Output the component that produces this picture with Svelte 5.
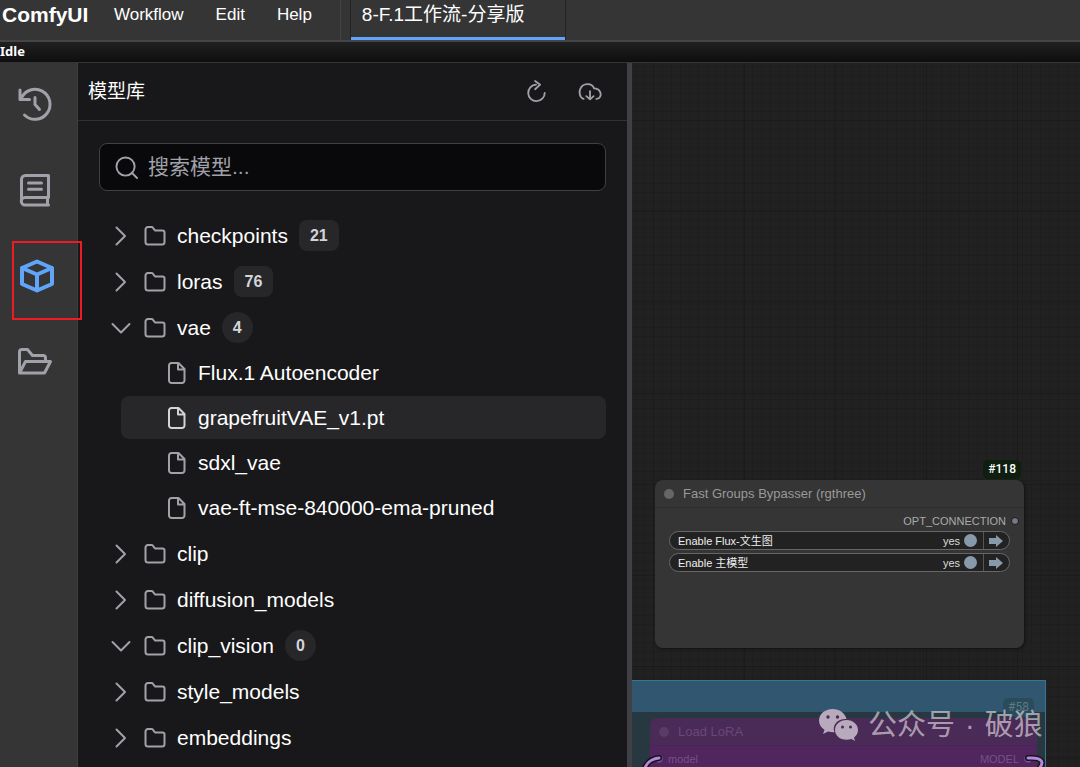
<script lang="ts">
	interface TreeNode {
		name: string;
		count?: number;
		open?: boolean;
		children?: string[];
	}

	let folders: TreeNode[] = $state([
		{ name: 'checkpoints', count: 21 },
		{ name: 'loras', count: 76 },
		{
			name: 'vae',
			count: 4,
			open: true,
			children: ['Flux.1 Autoencoder', 'grapefruitVAE_v1.pt', 'sdxl_vae', 'vae-ft-mse-840000-ema-pruned']
		},
		{ name: 'clip' },
		{ name: 'diffusion_models' },
		{ name: 'clip_vision', count: 0, open: true },
		{ name: 'style_models' },
		{ name: 'embeddings' }
	]);

	const menus = ['Workflow', 'Edit', 'Help'];
	const widgets = ['Enable Flux-文生图', 'Enable 主模型'];
	const tabs = ['queue', 'nodes', 'models', 'workflows'];

	let activeTab = $state('models');
	let selected = $state('grapefruitVAE_v1.pt');
	let query = $state('');
</script>

<div class="app">
	<header class="topbar">
		<h1>ComfyUI</h1>
		<nav>
			{#each menus as menu}
				<button class="menu">{menu}</button>
			{/each}
		</nav>
		<button class="workflow-tab">8-F.1工作流-分享版</button>
	</header>
	<div class="status">Idle</div>

	<main>
		<aside class="sidebar">
			{#each tabs as tab}
				<button class="side-tab" class:active={activeTab === tab} aria-label={tab} onclick={() => (activeTab = tab)}>
					<svg viewBox="0 0 36 36">
						{#if tab === 'queue'}
							<path d="M3 4v9.500h9.500M4 13a15 15 0 1 1 3.500 16M18 11.500v7l4.500 5" />
						{:else if tab === 'nodes'}
							<path d="M8.500 3.500H31.500V25.500H8a3.700 3.700 0 0 0 0 7.500H31.500M4.500 29V7.500a4 4 0 0 1 4-4M30.500 25.500V33M11.500 11h13M11.500 17.300h13" />
						{:else if tab === 'models'}
							<path d="M20 3.500L35 10V26L20 32.500L5 26V10ZM5 10L20 16.500L35 10M20 16.500V32.500" />
						{:else}
							<path d="M2.500 29V8q0-2.500 2.500-2.500h5.500l5 6H26q2.500 0 2.500 2.500v3M2.500 29L8.500 17.500H33.500L27.500 29Z" />
						{/if}
					</svg>
					{#if tab === 'models'}
						<span class="marker"></span>
					{/if}
				</button>
			{/each}
		</aside>

		<section class="panel">
			<div class="panel-header">
				<h2>模型库</h2>
				<button class="tool" aria-label="Refresh">
					<svg viewBox="0 0 24 24"><path d="M12 4A9 9 0 1 0 21.500 13M11 0l5.500 4L11 9" /></svg>
				</button>
				<button class="tool" aria-label="Load all folders">
					<svg viewBox="0 0 24 24"><path d="M5 19.500C0 18 0 11 1.500 8.500C4 2 14 1.500 16.500 8C23 8 25.500 15 22 18.500Q20 19.500 19 19.500M12 11v9M8 16.500l4 3.500l4-3.500" /></svg>
				</button>
			</div>

			<div class="panel-body">
				<label class="search">
					<svg viewBox="0 0 24 24"><circle cx="11" cy="11" r="9.500" /><path d="M17.500 17.500L23 23" /></svg>
					<input type="text" placeholder="搜索模型..." aria-label="搜索模型" bind:value={query} />
				</label>

				<ul class="tree">
					{#each folders as folder}
						<li>
							<button class="row" onclick={() => (folder.open = !folder.open)}>
								<svg class="chevron" viewBox="0 0 24 24">
									<path d={folder.open ? 'M3.500 8L12 16.500L20.500 8' : 'M7.500 3.500L16 12L7.500 20.500'} />
								</svg>
								<svg class="folder" viewBox="0 0 22 22">
									<path d="M1.500 17V4.500a2.500 2.500 0 0 1 2.500-2.500h3.500q1 0 1.500.800l2 2.700h7.500a2 2 0 0 1 2 2V17a2.500 2.500 0 0 1-2.500 2.500H4A2.500 2.500 0 0 1 1.500 17Z" />
								</svg>
								<span>{folder.name}</span>
								{#if folder.count !== undefined}
									<span class="badge" class:round={folder.count < 10}>{folder.count}</span>
								{/if}
							</button>
							{#if folder.open && folder.children}
								<ul class="leaves">
									{#each folder.children as file}
										<li>
											<button class="row leaf" class:selected={selected === file} onclick={() => (selected = file)}>
												<svg class="file" viewBox="0 0 20 22">
													<path d="M4 1h7.500l6 6v11.500a2.500 2.500 0 0 1-2.500 2.500H4.500A2.500 2.500 0 0 1 2 18.500V3.500A2.500 2.500 0 0 1 4.500 1M11 1v6.500h6.500" />
												</svg>
												<span>{file}</span>
											</button>
										</li>
									{/each}
								</ul>
							{/if}
						</li>
					{/each}
				</ul>
			</div>
		</section>

		<div class="gutter"></div>

		<section class="canvas">
			<div class="group"></div>

			<article class="node bypasser">
				<span class="node-id">#118</span>
				<h3>Fast Groups Bypasser (rgthree)</h3>
				<div class="output">OPT_CONNECTION <i class="slot"></i></div>
				{#each widgets as widget}
					<div class="widget">
						<span class="widget-name">{widget}</span>
						<span>yes</span>
						<i class="knob"></i>
						<button class="jump" aria-label="Go to group">
							<svg viewBox="0 0 14 12"><path d="M0 3h7V0l7 6l-7 6V9H0Z" /></svg>
						</button>
					</div>
				{/each}
			</article>

			<article class="node lora">
				<span class="node-id">#58</span>
				<h3>Load LoRA</h3>
				<div class="ports"><i class="slot"></i><span>model</span><span class="out">MODEL</span><i class="slot"></i></div>
			</article>

			<svg class="links" viewBox="0 0 420 20">
				<path class="casing" d="M27 11C18 12 14 16 12 24M396 11C412 10 413 16 405 24" />
				<path d="M27 11C18 12 14 16 12 24M396 11C412 10 413 16 405 24" />
			</svg>

			<div class="watermark">
				<svg viewBox="0 0 39 32">
					<path d="M13.500 0C6 0 0 5 0 11.500c0 4 2 7 5.500 9.200L4 25l5-2.500q3 1 6.500.800C12.500 16 19 9.500 27.500 10C26 4 20.500 0 13.500 0Z" />
					<path d="M27.500 11C21 11 16 15.500 16 21s5 9.800 11.500 9.800q2.500 0 5-.800L36 32l-1-3.500c2.500-1.800 4-4.500 4-7.500C39 15.500 34 11 27.500 11Z" />
					<g class="eyes">
						<circle cx="9" cy="8" r="1.700" /><circle cx="18.500" cy="8" r="1.700" />
						<circle cx="23.500" cy="18" r="1.500" /><circle cx="31.500" cy="18" r="1.500" />
					</g>
				</svg>
				<span>公众号</span><span>·</span><span>破狼</span>
			</div>
		</section>
	</main>
</div>

<style>
	:global(body) {
		background: #18181a;
	}

	.app {
		display: flex;
		flex-direction: column;
		height: 100vh;
		overflow: hidden;
		font-family: 'Liberation Sans', 'Noto Sans CJK SC', sans-serif;
		color: #fff;
	}

	.app * {
		box-sizing: border-box;
	}

	h1,
	h2,
	h3,
	ul {
		margin: 0;
		padding: 0;
		list-style: none;
	}

	button {
		padding: 0;
		border: 0;
		background: none;
		color: inherit;
		font: inherit;
		cursor: pointer;
	}

	svg {
		display: block;
		flex: none;
		fill: none;
		stroke: #a1a1aa;
		stroke-width: 2;
		stroke-linecap: round;
		stroke-linejoin: round;
		overflow: visible;
	}

	.topbar {
		display: flex;
		flex: none;
		height: 42px;
		padding-left: 2px;
		background: #353535;
		border-bottom: 2px solid #464646;
		line-height: 29px;
	}

	h1 {
		width: 98px;
		font-size: 21px;
	}

	nav {
		display: flex;
		gap: 32px;
		padding-left: 14px;
		padding-right: 28px;
		border-right: 1px solid #42424a;
	}

	.menu {
		display: flex;
		font-size: 17px;
	}

	.workflow-tab {
		display: flex;
		width: 216px;
		margin-left: 9px;
		padding-left: 11px;
		border: 1px solid #232323;
		border-width: 0 1px;
		box-shadow: inset 0 -3px #60a5fa;
		font-size: 19px;
	}

	.status {
		flex: none;
		height: 21px;
		background: linear-gradient(#202020, #0e0e0e);
		border-bottom: 1px solid #353538;
		font: bold 13px/18px 'Noto Sans', sans-serif;
	}

	main {
		display: grid;
		grid-template-columns: 78px minmax(0, 549fr) 5px minmax(0, 448fr);
		grid-template-rows: minmax(0, 1fr);
		flex: 1;
		min-height: 0;
	}

	.sidebar {
		display: flex;
		flex-direction: column;
		gap: 4px;
		background: #353535;
		border-right: 1px solid #3e3e40;
	}

	.side-tab {
		position: relative;
		display: flex;
		align-items: center;
		height: 82px;
		padding-left: 17px;
	}

	.side-tab svg {
		width: 36px;
		height: 36px;
		stroke-width: 3;
	}

	.side-tab.active svg {
		stroke: #60a5fa;
		stroke-width: 4;
	}

	.marker {
		position: absolute;
		z-index: 1;
		top: 6px;
		left: 12px;
		width: 70px;
		height: 79px;
		border: 2px solid #ed1c24;
	}

	.panel {
		background: #18181a;
		overflow: hidden;
	}

	.panel-header {
		display: flex;
		align-items: center;
		height: 58px;
		padding: 0 10px;
		border-bottom: 1px solid #303036;
	}

	h2 {
		flex: 1;
		font-size: 19px;
		font-weight: 400;
		line-height: 24px;
	}

	.tool {
		display: flex;
		justify-content: center;
		width: 54px;
	}

	.tool svg {
		width: 22px;
		height: 22px;
	}

	.panel-body {
		padding: 22px 21px;
	}

	.search {
		display: flex;
		align-items: center;
		gap: 10px;
		height: 48px;
		padding: 0 15px;
		background: #09090b;
		border: 1px solid #3f3f46;
		border-radius: 8px;
	}

	.search svg {
		width: 23px;
		height: 23px;
	}

	input {
		flex: 1;
		min-width: 0;
		padding: 0;
		border: 0;
		outline: 0;
		background: none;
		color: #fff;
		font: inherit;
		font-size: 21px;
	}

	input::placeholder {
		color: #a1a1aa;
		opacity: 1;
	}

	.tree {
		display: grid;
		gap: 3px;
		padding-top: 23px;
		font-size: 21px;
	}

	.leaves {
		display: grid;
		gap: 2px;
		margin: 2px 0 0 22px;
	}

	.row {
		display: flex;
		align-items: center;
		gap: 11px;
		width: 100%;
		height: 43px;
		padding-left: 10px;
		border-radius: 8px;
		text-align: left;
	}

	.leaf {
		padding-left: 46px;
	}

	.leaf.selected {
		background: #27272a;
	}

	.leaf.selected svg {
		stroke: #d4d4d8;
	}

	.chevron {
		width: 24px;
		height: 24px;
	}

	.folder {
		width: 22px;
		height: 22px;
	}

	.file {
		width: 20px;
		height: 22px;
	}

	.badge {
		min-width: 31px;
		padding: 0 11px;
		background: #27272a;
		border-radius: 8px;
		color: #d4d4d8;
		font-size: 16px;
		font-weight: 700;
		line-height: 31px;
	}

	.badge.round {
		border-radius: 50%;
	}

	.gutter {
		background: #3f3f46;
	}

	.canvas {
		position: relative;
		overflow: hidden;
		background-color: #212121;
		background-image:
			linear-gradient(90deg, #1b1b1b 1px, transparent 1px),
			linear-gradient(#1b1b1b 1px, transparent 1px),
			linear-gradient(90deg, #1e1e1e 1px, transparent 1px),
			linear-gradient(#1e1e1e 1px, transparent 1px);
		background-size:
			91px 91px,
			91px 91px,
			9px 9px,
			9px 9px;
		background-position: 21px 57px;
	}

	.node {
		position: absolute;
		border-radius: 8px;
		font-size: 11px;
	}

	.bypasser {
		top: 417px;
		left: 23px;
		width: 369px;
		height: 168px;
		background: #353535;
		box-shadow: 1px 1px 3px #111;
	}

	.node-id {
		position: absolute;
		right: 3px;
		bottom: 100%;
		margin-bottom: 1px;
		padding: 0 5px;
		background: #0f1f0f;
		border-radius: 5px;
		font-family: Roboto, sans-serif;
		font-size: 12px;
		font-weight: 500;
		line-height: 19px;
	}

	h3 {
		display: flex;
		align-items: center;
		gap: 9px;
		height: 28px;
		padding-left: 9px;
		border-bottom: 1px solid #2d2d2d;
		color: #999;
		font-size: 13px;
		font-weight: 400;
	}

	h3::before {
		content: '';
		width: 10px;
		height: 10px;
		border-radius: 50%;
		background: #666;
	}

	.output {
		display: flex;
		justify-content: flex-end;
		align-items: center;
		gap: 5px;
		height: 23px;
		padding: 2px 5px 0 0;
		color: #aaa;
	}

	.slot {
		width: 8px;
		height: 8px;
		border: 1px solid #1a1a1a;
		border-radius: 50%;
		background: #778;
	}

	.widget {
		display: flex;
		align-items: center;
		gap: 4px;
		height: 19px;
		margin: 0 14px 3px;
		padding-left: 8px;
		background: #222;
		border: 1px solid #666;
		border-radius: 10px;
		color: #ddd;
		line-height: 16px;
	}

	.widget-name {
		flex: 1;
		color: #eee;
	}

	.knob {
		width: 13px;
		height: 13px;
		border-radius: 50%;
		background: #89a;
	}

	.jump {
		display: flex;
		align-self: stretch;
		align-items: center;
		width: 26px;
		margin-left: 2px;
		padding-left: 5px;
		border-left: 1px solid #555;
	}

	.jump svg {
		width: 14px;
		height: 12px;
		fill: #89a;
		stroke: none;
	}

	.group {
		position: absolute;
		top: 617px;
		bottom: 0;
		left: 0;
		width: 414px;
		background: linear-gradient(#31566f 31px, #283840 31px);
		border: 1px solid #3c7294;
		border-width: 1px 1px 0 0;
	}

	.lora {
		top: 655px;
		left: 18px;
		width: 387px;
		height: 80px;
		background: #51265f;
	}

	.lora .node-id {
		background: #2a4b5b;
		color: #5e7a83;
		font-weight: 400;
	}

	.lora h3 {
		background: #4a2a56;
		border-color: #482459;
		border-radius: 8px 8px 0 0;
		color: #6b4777;
	}

	.lora h3::before {
		background: #5a3a66;
	}

	.ports {
		display: flex;
		align-items: center;
		gap: 5px;
		height: 25px;
		padding: 0 5px;
		color: #765083;
	}

	.ports .slot {
		background: #8060a0;
		border-color: #604080;
	}

	.out {
		margin-left: auto;
	}

	.links {
		position: absolute;
		bottom: 0;
		left: 0;
		width: 420px;
		height: 20px;
		stroke: #b488da;
		stroke-width: 3;
	}

	.links path {
		stroke: #b488da;
	}

	.links .casing {
		stroke: #17121c;
		stroke-width: 6;
	}

	.watermark {
		position: absolute;
		top: 646px;
		left: 187px;
		display: flex;
		align-items: center;
		gap: 10px;
		color: rgba(226, 222, 228, 0.65);
		font: 29px/32px 'Liberation Sans', 'Noto Sans CJK SC', sans-serif;
	}

	.watermark svg {
		width: 39px;
		height: 32px;
		fill: #b9a9bd;
		stroke: none;
	}

	.watermark .eyes {
		fill: #4a2a56;
	}
</style>
